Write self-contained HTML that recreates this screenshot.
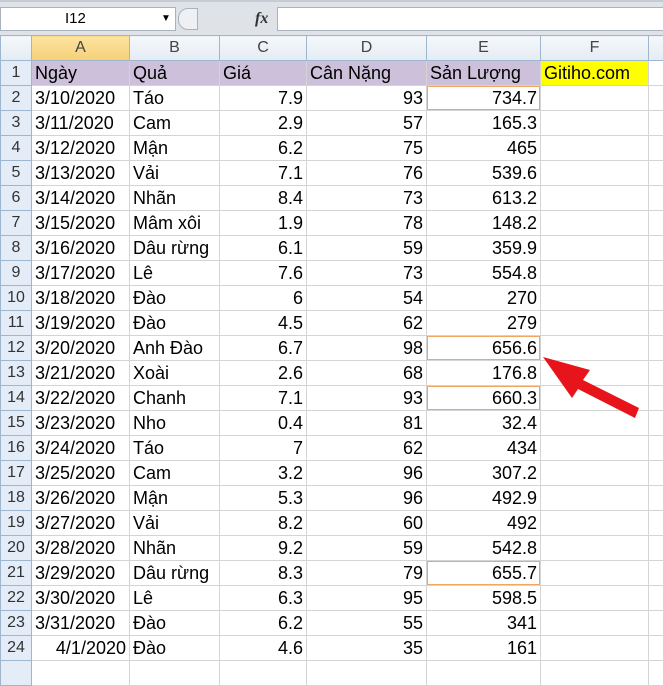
<!DOCTYPE html><html><head><style>
body{margin:0;width:663px;height:678px;overflow:hidden;background:#fff;font-family:"Liberation Sans",Arial,sans-serif;position:relative}
.fb{position:absolute;left:0;top:0;width:663px;height:35px;background:#dfe3e8;border-top:2px solid #c5cbd3}
.nb{position:absolute;left:0;top:5px;width:174px;height:22px;background:#fff;border:1px solid #a9b2bd;font-size:15px;line-height:22px}
.fx{position:absolute;left:277px;top:5px;width:386px;height:22px;background:#fff;border:1px solid #a9b2bd}
table{position:absolute;left:0;top:35px;border-collapse:collapse;table-layout:fixed;width:668px}
td{height:24px;border:1px solid #d4d4d4;font-size:18px;padding:0 3px;white-space:nowrap;overflow:hidden;line-height:24px;color:#000}
td.h{background:#e4ecf7;color:#333;text-align:center;font-size:16px;border-color:#9eb6ce}
tr.hd td{background:linear-gradient(#f5f8fb,#e4ebf3);color:#444;text-align:center;font-size:16px;border-color:#9eb6ce}
tr.hd td.sel{background:linear-gradient(#fbe3a0,#f7d078)}
td.hl{background:#ccc0da}
td.r{text-align:right}
td.o{box-shadow:inset 0 0 0 1px #f0a860}
</style></head><body>
<div class="fb">
<div class="nb"><span style="position:absolute;left:64px">I12</span><span style="position:absolute;left:160px;font-size:10px">▼</span></div>
<div style="position:absolute;left:178px;top:6px;width:18px;height:20px;border:1px solid #a9b2bd;border-radius:10px 0 0 10px;background:#eef0f3"></div>
<div style="position:absolute;left:255px;top:8px;font-style:italic;font-family:'Liberation Serif',serif;font-size:16px;font-weight:bold;color:#333">fx</div>
<div class="fx"></div>
</div>
<table>
<colgroup><col style="width:31px"><col style="width:98px"><col style="width:90px"><col style="width:87px"><col style="width:120px"><col style="width:114px"><col style="width:108px"><col style="width:20px"></colgroup>
<tr class="hd"><td></td><td class="sel">A</td><td>B</td><td>C</td><td>D</td><td>E</td><td>F</td><td></td></tr>
<tr><td class="h">1</td><td class="hl">Ngày</td><td class="hl">Quả</td><td class="hl">Giá</td><td class="hl">Cân Nặng</td><td class="hl">Sản Lượng</td><td style="background:#ffff00">Gitiho.com</td><td></td></tr>
<tr><td class="h">2</td><td>3/10/2020</td><td>Táo</td><td class="r">7.9</td><td class="r">93</td><td class="r o">734.7</td><td></td><td></td></tr>
<tr><td class="h">3</td><td>3/11/2020</td><td>Cam</td><td class="r">2.9</td><td class="r">57</td><td class="r">165.3</td><td></td><td></td></tr>
<tr><td class="h">4</td><td>3/12/2020</td><td>Mận</td><td class="r">6.2</td><td class="r">75</td><td class="r">465</td><td></td><td></td></tr>
<tr><td class="h">5</td><td>3/13/2020</td><td>Vải</td><td class="r">7.1</td><td class="r">76</td><td class="r">539.6</td><td></td><td></td></tr>
<tr><td class="h">6</td><td>3/14/2020</td><td>Nhãn</td><td class="r">8.4</td><td class="r">73</td><td class="r">613.2</td><td></td><td></td></tr>
<tr><td class="h">7</td><td>3/15/2020</td><td>Mâm xôi</td><td class="r">1.9</td><td class="r">78</td><td class="r">148.2</td><td></td><td></td></tr>
<tr><td class="h">8</td><td>3/16/2020</td><td>Dâu rừng</td><td class="r">6.1</td><td class="r">59</td><td class="r">359.9</td><td></td><td></td></tr>
<tr><td class="h">9</td><td>3/17/2020</td><td>Lê</td><td class="r">7.6</td><td class="r">73</td><td class="r">554.8</td><td></td><td></td></tr>
<tr><td class="h">10</td><td>3/18/2020</td><td>Đào</td><td class="r">6</td><td class="r">54</td><td class="r">270</td><td></td><td></td></tr>
<tr><td class="h">11</td><td>3/19/2020</td><td>Đào</td><td class="r">4.5</td><td class="r">62</td><td class="r">279</td><td></td><td></td></tr>
<tr><td class="h">12</td><td>3/20/2020</td><td>Anh Đào</td><td class="r">6.7</td><td class="r">98</td><td class="r o">656.6</td><td></td><td></td></tr>
<tr><td class="h">13</td><td>3/21/2020</td><td>Xoài</td><td class="r">2.6</td><td class="r">68</td><td class="r">176.8</td><td></td><td></td></tr>
<tr><td class="h">14</td><td>3/22/2020</td><td>Chanh</td><td class="r">7.1</td><td class="r">93</td><td class="r o">660.3</td><td></td><td></td></tr>
<tr><td class="h">15</td><td>3/23/2020</td><td>Nho</td><td class="r">0.4</td><td class="r">81</td><td class="r">32.4</td><td></td><td></td></tr>
<tr><td class="h">16</td><td>3/24/2020</td><td>Táo</td><td class="r">7</td><td class="r">62</td><td class="r">434</td><td></td><td></td></tr>
<tr><td class="h">17</td><td>3/25/2020</td><td>Cam</td><td class="r">3.2</td><td class="r">96</td><td class="r">307.2</td><td></td><td></td></tr>
<tr><td class="h">18</td><td>3/26/2020</td><td>Mận</td><td class="r">5.3</td><td class="r">96</td><td class="r">492.9</td><td></td><td></td></tr>
<tr><td class="h">19</td><td>3/27/2020</td><td>Vải</td><td class="r">8.2</td><td class="r">60</td><td class="r">492</td><td></td><td></td></tr>
<tr><td class="h">20</td><td>3/28/2020</td><td>Nhãn</td><td class="r">9.2</td><td class="r">59</td><td class="r">542.8</td><td></td><td></td></tr>
<tr><td class="h">21</td><td>3/29/2020</td><td>Dâu rừng</td><td class="r">8.3</td><td class="r">79</td><td class="r o">655.7</td><td></td><td></td></tr>
<tr><td class="h">22</td><td>3/30/2020</td><td>Lê</td><td class="r">6.3</td><td class="r">95</td><td class="r">598.5</td><td></td><td></td></tr>
<tr><td class="h">23</td><td>3/31/2020</td><td>Đào</td><td class="r">6.2</td><td class="r">55</td><td class="r">341</td><td></td><td></td></tr>
<tr><td class="h">24</td><td class="r">4/1/2020</td><td>Đào</td><td class="r">4.6</td><td class="r">35</td><td class="r">161</td><td></td><td></td></tr>
<tr><td class="h"></td><td></td><td></td><td></td><td></td><td></td><td></td><td></td></tr>
</table>
<svg style="position:absolute;left:0;top:0" width="663" height="678">
<polygon points="543,357 590,370 583,380 639,408 635,418 578,389 572,398" fill="#e8141c"/>
</svg>
</body></html>
